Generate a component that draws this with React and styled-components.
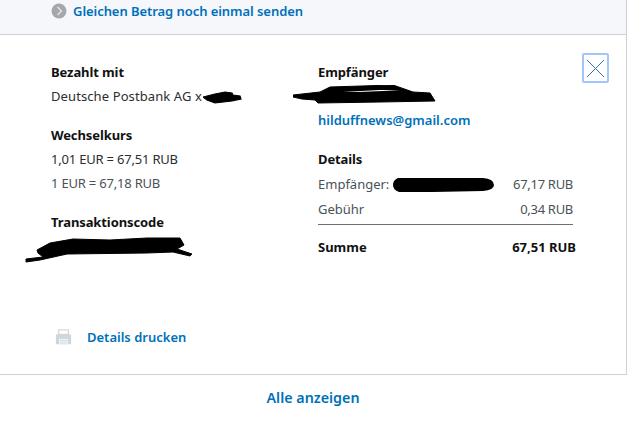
import styled, { createGlobalStyle } from "styled-components"

const GlobalStyle = createGlobalStyle`
    html, body {
        margin: 0;
        padding: 0;
        background: #fff;
    }
    body {
        font-family: "Noto Sans", "Open Sans", sans-serif;
        color: #2c2e2f;
    }
`

const Page = styled.div`
    width: 636px;
    height: 425px;
    overflow: hidden;
    display: flex;
    flex-direction: column;
`

const Frame = styled.div`
    width: 626px;
    border-right: 1px solid #cbd2d6;
`

const TopBar = styled.div`
    height: 35px;
    box-sizing: border-box;
    padding: 0 0 12px 51px;
    display: flex;
    align-items: center;
    gap: 6px;
    background: #f5f7fa;
    border-bottom: 1px solid #cbd2d6;
`

const LinkText = styled.a`
    display: block;
    color: #0070ba;
    font-weight: 600;
    font-size: ${props => props.size || '13px'};
    line-height: 18px;
    letter-spacing: ${props => props.spacing || '0'};
    margin-top: ${props => props.top || '0'};
    white-space: nowrap;
`

const Body = styled.div`
    position: relative;
    height: 340px;
    box-sizing: border-box;
    padding: 28px 53px 0 51px;
    display: flex;
    flex-direction: column;
    border-bottom: 1px solid #cbd2d6;
`

const Columns = styled.div`
    display: grid;
    grid-template-columns: 267px 255px;
    height: 265px;
`

const Column = styled.div`
    display: flex;
    flex-direction: column;
`

const Heading = styled.div`
    font-size: 13px;
    line-height: 18px;
    font-weight: 700;
    letter-spacing: -0.1px;
    color: #111;
    margin-top: ${props => props.top || '0'};
`

const Line = styled.div`
    position: relative;
    font-size: 13px;
    line-height: 18px;
    letter-spacing: ${props => props.tight ? '-0.2px' : '0.1px'};
    margin-top: ${props => props.top || '6px'};
    color: ${props => props.soft ? '#4a5257' : '#2c2e2f'};
    height: ${props => props.height || '18px'};
    white-space: nowrap;
`

const Row = styled.div`
    display: flex;
    justify-content: space-between;
    font-size: 13px;
    line-height: 18px;
    margin-top: ${props => props.top || '7px'};
    color: #4a5257;
`

const Label = styled.span`
    position: relative;
`

const Amount = styled.span`
    letter-spacing: -0.3px;
`

const Total = styled(Row)`
    font-weight: 700;
    color: #111;
    width: 258px;
`

const Rule = styled.div`
    height: 1px;
    background: #6c7378;
    margin-top: 6px;
`

const Scribble = styled.svg`
    position: absolute;
    left: ${props => props.x}px;
    top: ${props => props.y}px;
`

const CloseButton = styled.button`
    position: absolute;
    left: 582px;
    top: 18px;
    width: 27px;
    height: 30px;
    padding: 0;
    box-sizing: border-box;
    background: #fff;
    border: 2px solid #a3c5fb;
    border-radius: 2px;
    display: flex;
    align-items: center;
    justify-content: center;
`

const PrintRow = styled.div`
    display: flex;
    align-items: center;
    padding-left: 4px;
    gap: 15px;
`

const Footer = styled.div`
    flex: 1;
    display: flex;
    justify-content: center;
    padding-top: 14px;
    width: 626px;
    box-sizing: border-box;
`

const ChevronBadge = () => (
    <svg width="16" height="16" viewBox="0 0 16 16">
        <circle cx="8" cy="8" r="7.5" fill="#a4a8ab" />
        <path d="M6.5 4l4 4-4 4" fill="none" stroke="#e4e6e8" strokeWidth="1.4" />
    </svg>
)

const PrinterIcon = () => (
    <svg width="17" height="17" viewBox="0 0 19 19">
        <path d="M4 1h11v5H4z" fill="none" stroke="#d3dade" strokeWidth="1.6" />
        <path d="M2 6h15a1 1 0 0 1 1 1v9a1 1 0 0 1-1 1H2a1 1 0 0 1-1-1V7a1 1 0 0 1 1-1z" fill="#cfd7dc" />
        <path d="M4.5 11h10v7h-10z" fill="#f0f3f5" />
        <path d="M5.5 13h8M5.5 15.5h8" stroke="#cfd7dc" strokeWidth="1" />
    </svg>
)

const App = () => {
    return (
        <Page>
            <GlobalStyle />
            <Frame>
                <TopBar>
                    <ChevronBadge />
                    <LinkText spacing="-0.06px">Gleichen Betrag noch einmal senden</LinkText>
                </TopBar>
                <Body>
                    <CloseButton>
                        <svg width="19" height="19" viewBox="0 0 19 19">
                            <path d="M1 1l17 17M18 1L1 18" stroke="#2f74ad" strokeWidth="1" fill="none" />
                        </svg>
                    </CloseButton>
                    <Columns>
                        <Column>
                            <Heading>Bezahlt mit</Heading>
                            <Line>
                                Deutsche Postbank AG x
                                <Scribble x={152} y={3} width="40" height="15" viewBox="0 0 40 15">
                                    <path d="M0 7L12 4 22 2 29 3 30 5 37 6 38 9 29 11 12 13 4 10z" fill="#000" stroke="#000" strokeWidth="1.2" />
                                </Scribble>
                            </Line>
                            <Heading top="21px">Wechselkurs</Heading>
                            <Line tight>1,01 EUR = 67,51 RUB</Line>
                            <Line soft tight>1 EUR = 67,18 RUB</Line>
                            <Heading top="21px">Transaktionscode</Heading>
                            <Line height="30px">
                                <Scribble x={-27} y={-1} width="170" height="28" viewBox="0 0 170 28">
                                    <path d="M13 14L26 7 49 3 86 4 123 2 156 2 160 9 153 13 168 18 166 20 149 16 123 17 43 18 16 24 2 26 2 23 19 21 14 17z" fill="#000" stroke="#000" />
                                </Scribble>
                            </Line>
                        </Column>
                        <Column>
                            <Heading>Empfänger</Heading>
                            <Line height="19px" top="5px">
                                <Scribble x={-25} y={-1} width="144" height="20" viewBox="0 0 144 20">
                                    <path d="M0 10L27 7 37 2 100 0 120 7 137 8 142 16 87 17 25 18 22 15 9 14 0 12z" fill="#000" stroke="#000" />
                                    <path d="M50 7L87 5 107 5 90 6 65 7z" fill="#fff" />
                                </Scribble>
                            </Line>
                            <LinkText top="6px">hilduffnews@gmail.com</LinkText>
                            <Heading top="21px">Details</Heading>
                            <Row>
                                <Label>
                                    Empfänger:
                                    <Scribble x={75} y={3} width="102" height="14" viewBox="0 0 102 14">
                                        <path d="M5 0H90Q101 1 101 7 101 12 90 13L40 14H6Q0 12 0 7 0 2 5 0z" fill="#000" />
                                    </Scribble>
                                </Label>
                                <Amount>67,17 RUB</Amount>
                            </Row>
                            <Row>
                                <span>Gebühr</span>
                                <Amount>0,34 RUB</Amount>
                            </Row>
                            <Rule />
                            <Total top="13px">
                                <span>Summe</span>
                                <span>67,51 RUB</span>
                            </Total>
                        </Column>
                    </Columns>
                    <PrintRow>
                        <PrinterIcon />
                        <LinkText>Details drucken</LinkText>
                    </PrintRow>
                </Body>
            </Frame>
            <Footer>
                <LinkText size="14.3px">Alle anzeigen</LinkText>
            </Footer>
        </Page>
    )
}

export default App
